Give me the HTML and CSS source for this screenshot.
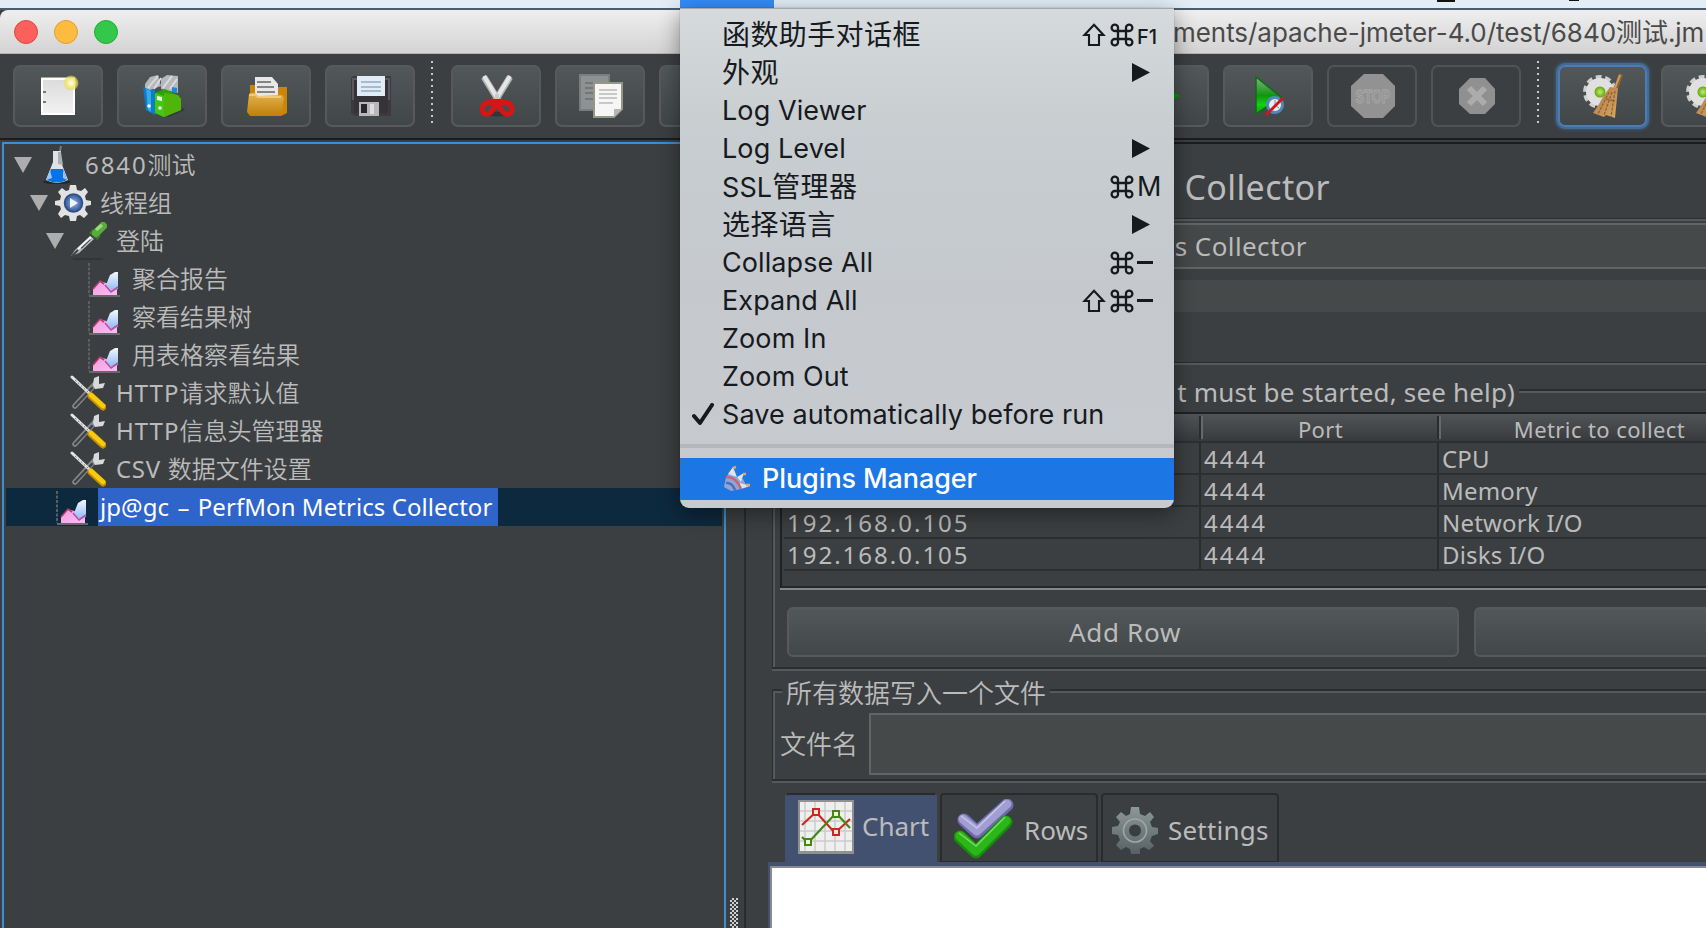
FILE: index.html
```html
<!DOCTYPE html>
<html lang="zh">
<head>
<meta charset="utf-8">
<title>6840测试.jmx - Apache JMeter</title>
<link rel="stylesheet" href="styles.css">
</head>
<body>
<svg class="defs" width="0" height="0" aria-hidden="true">
  <defs>
    <linearGradient id="gBlue" x1="0" y1="0" x2="0" y2="1"><stop offset="0" stop-color="#f2f8ff"/><stop offset="1" stop-color="#8db9f5"/></linearGradient>
    <linearGradient id="gPink" x1="0" y1="0" x2="1" y2="1"><stop offset="0" stop-color="#f59bdd"/><stop offset="1" stop-color="#f9bdf5"/></linearGradient>
    <linearGradient id="gGold" x1="0" y1="0" x2="0" y2="1"><stop offset="0" stop-color="#e3b450"/><stop offset="1" stop-color="#c07f08"/></linearGradient>
    <linearGradient id="gPage" x1="0" y1="0" x2="0" y2="1"><stop offset="0" stop-color="#dcdcdc"/><stop offset="1" stop-color="#f2f2f2"/></linearGradient>
    <linearGradient id="gPlay" x1="0" y1="0" x2="0" y2="1"><stop offset="0" stop-color="#7fb77f"/><stop offset=".5" stop-color="#129512"/><stop offset=".75" stop-color="#12d212"/><stop offset="1" stop-color="#0a9a0a"/></linearGradient>
    <linearGradient id="gGear" x1="0" y1="0" x2="0" y2="1"><stop offset="0" stop-color="#8e9898"/><stop offset="1" stop-color="#566163"/></linearGradient>
    <linearGradient id="gBroom" x1="0" y1="0" x2="1" y2="1"><stop offset="0" stop-color="#a97a45"/><stop offset="1" stop-color="#dca562"/></linearGradient>
    <radialGradient id="gOrb"><stop offset="0" stop-color="#c4ec70"/><stop offset="1" stop-color="#5fa90c"/></radialGradient>
    <radialGradient id="gSpark"><stop offset="0" stop-color="#fffef0"/><stop offset=".5" stop-color="#f7ec8a"/><stop offset="1" stop-color="#e8d84a" stop-opacity=".5"/></radialGradient>
    <radialGradient id="gPlayBall"><stop offset="0" stop-color="#9fb6da"/><stop offset="1" stop-color="#2b5596"/></radialGradient>
  </defs>
  <symbol id="graph" viewBox="0 0 34 34">
    <path d="M2 0V32" stroke="#5c5f61" stroke-width="2" stroke-dasharray="3 1.5"/>
    <path d="M2 33H33" stroke="#66686a" stroke-width="2"/>
    <path d="M6 32V26L13 18L19 20L30 22V32Z" fill="url(#gPink)"/>
    <path d="M6 26L13 18L17 21" fill="none" stroke="#b23a6c" stroke-width="1.6"/>
    <path d="M19 22L23 12L28 9H31V26L25 28Z" fill="url(#gBlue)"/>
    <path d="M18 22L24 29L31 24" fill="none" stroke="#b8509c" stroke-width="1.6"/>
  </symbol>
  <symbol id="tools" viewBox="0 0 36 36">
    <path d="M5 31L25 9" stroke="#85888a" stroke-width="5.500" stroke-linecap="round"/>
    <path d="M5 31L22 13" stroke="#3e4244" stroke-width="2.4" stroke-linecap="round"/>
    <path d="M29 1L24 3L23 10L25 14L33 13L35 8L29 9Z" fill="#d9d9d9"/>
    <path d="M2 2L19 18" stroke="#e6e6e6" stroke-width="3" stroke-linecap="round"/>
    <path d="M5 5L19 18" stroke="#777" stroke-width="1" stroke-dasharray="2 2"/>
    <path d="M21 21L33 32" stroke="#c48f04" stroke-width="7" stroke-linecap="round"/>
    <path d="M21 20L33 31" stroke="#f9cb0c" stroke-width="4.6" stroke-linecap="round"/>
  </symbol>
  <symbol id="sweep" viewBox="0 0 44 46">
    <circle cx="18" cy="19" r="14.500" fill="none" stroke="#cfcfcf" stroke-width="5" stroke-dasharray="5.600 3.510"/>
    <circle cx="18" cy="19" r="9.5" fill="none" stroke="#e0e0e0" stroke-width="9"/>
    <circle cx="18" cy="19" r="5.5" fill="url(#gOrb)"/>
    <path d="M39 1L34 15" stroke="#8b6233" stroke-width="4.5"/><path d="M38 2L33 15" stroke="#d0a066" stroke-width="2"/>
    <path d="M28 14L36 15L33 45L24 42L22 44L11 40L17 31L21 24Z" fill="url(#gBroom)"/>
    <path d="M27 19L16 41M30 19L22 42M33 18L29 44M24 26L33 28" stroke="#8a6233" stroke-width="1.2" fill="none" stroke-dasharray="3 1.2"/>
  </symbol>
  <symbol id="cmd" viewBox="0 0 24 24">
    <path d="M8 8H16V16H8ZM8 8V5.200A3.200 3.200 0 1 0 4.800 8H8M16 8H19.200A3.200 3.200 0 1 0 16 5.200V8M16 16V18.800A3.200 3.200 0 1 0 19.200 16H16M8 16H4.800A3.200 3.200 0 1 0 8 18.800V16" fill="none" stroke="#161a1e" stroke-width="2.3"/>
  </symbol>
  <symbol id="shift" viewBox="0 0 24 24">
    <path d="M12 1.800L21.500 12H17V22H7V12H2.500Z" fill="none" stroke="#161a1e" stroke-width="2.100" stroke-linejoin="miter"/>
  </symbol>
  <symbol id="sub" viewBox="0 0 18 19"><path d="M0 0L18 9.500L0 19Z" fill="#161a1e"/></symbol>
  <symbol id="open" viewBox="0 0 18 16"><path d="M0 0H18L9 16Z" fill="#adadad"/></symbol>
</svg>

<div class="menubar"><div class="menubar-active"></div><i class="bar-mark"></i><i class="bar-tail"></i></div>
<div class="window">
  <header class="titlebar">
    <span class="light red"></span><span class="light yellow"></span><span class="light green"></span>
    <span class="title">ments/apache-jmeter-4.0/test/6840测试.jm</span>
  </header>

  <div class="toolbar">
    <div class="tool"><svg width="40" height="42" viewBox="0 0 40 42"><path d="M2 3H36V40H2Z" fill="#fff"/><path d="M4 5H34V38H4Z" fill="url(#gPage)"/><path d="M2 2.500H36" stroke="#a5a594"/><path d="M4 17h3M4 27h3" stroke="#777" stroke-width="2"/><circle cx="32" cy="8" r="7.500" fill="url(#gSpark)"/></svg></div>
    <div class="tool"><svg width="44" height="44" viewBox="0 0 44 44"><path d="M22 40L42 34L44 36L28 43Z" fill="#353a3b"/><path d="M4 10L9 3L17 1L20 12L4 18ZM20 5L26 1L37 2V19L20 15Z" fill="#b5b9bb"/><path d="M7 14L17 2M13 15L20 4M22 14L31 2M29 15L36 5" stroke="#dcdedf" stroke-width="1.800"/><path d="M2 13L9 16L14 15V41L5 36Z" fill="#087dc8"/><path d="M5 15L10 17V38L7 36Z" fill="#39a8ea"/><path d="M31 13L36 14V19L31 18Z" fill="#1d8bd2"/><path d="M14 19L24 15L36 21L40 25V36L23 43L14 39Z" fill="#2aa40b"/><path d="M23 19L37 21L40 25V36L23 43Z" fill="#4fb50b"/><path d="M14 19L23 22V43L14 39Z" fill="#43c714"/><path d="M16 22L21 23V27L16 26Z" fill="#efffe8"/><circle cx="8" cy="32" r="1.800" fill="#fff"/><circle cx="19" cy="34" r="1.800" fill="#fff"/></svg></div>
    <div class="tool"><svg width="42" height="42" viewBox="0 0 42 42"><path d="M4 10H12V20H4ZM30 12H41V38L35 41Z" fill="#cb8605"/><path d="M9 2H26L32 9V23H9Z" fill="#e8e8e8"/><path d="M11 7H25M11 12H28M11 17H29" stroke="#858585" stroke-width="2"/><path d="M3 19L5 18H9L12 21L36 20L38 23L35 41H4L1 37Z" fill="url(#gGold)"/><path d="M3 20L10 20L12 22H35" stroke="#f0ca76" stroke-width="2" fill="none"/></svg></div>
    <div class="tool"><svg width="40" height="42" viewBox="0 0 40 42"><path d="M0 3L2 1H40V41H4L0 38Z" fill="#3c3a3d"/><path d="M1 3H39V25H1Z" fill="#5a595d"/><path d="M3 5H37V38H3Z" fill="#353338"/><path d="M6 1H34V21H6Z" fill="#e2ecf6"/><path d="M10 7H30M10 12H30M10 16H30" stroke="#91abc2" stroke-width="1.700"/><path d="M8 27H28V41H8Z" fill="#b8b8b8"/><path d="M10 29H16V38H10Z" fill="#29272a"/><path d="M19 29H23V39H19Z" fill="#ddd"/></svg></div>
    <div class="dots"></div>
    <div class="tool"><svg width="36" height="44" viewBox="0 0 36 44"><ellipse cx="18" cy="40" rx="13" ry="2.500" fill="#313637"/><path d="M5 3L21 29M31 3L15 29" stroke="#b2b5b5" stroke-width="6.500"/><path d="M5 2L20 27M31 2L16 27" stroke="#e6e6e6" stroke-width="4"/><path d="M17 27L9 28.500Q3 30 3 36Q4 41 9 40Q14 38 18 28Q22 38 27 40Q32 41 33 36Q33 30 27 28.500L19 27" fill="none" stroke="#d91414" stroke-width="5"/><path d="M16 20H20V25H16Z" fill="#c9c9c9"/></svg></div>
    <div class="tool"><svg width="44" height="46" viewBox="0 0 44 46"><path d="M1 2H30V37H1Z" fill="#8f9293"/><path d="M1 2H30V37H1Z" fill="none" stroke="#7b7e7f" stroke-width="2"/><path d="M6 10H24M6 15H24M6 20H24M6 26H22" stroke="#6c6f70" stroke-width="1.600"/><path d="M15 10H43V36L35 44H15Z" fill="#f6f6f6" stroke="#969686" stroke-width="2"/><path d="M20 17H38M20 21H38M20 25H38M20 30H34" stroke="#b9bab5" stroke-width="1.600"/><path d="M35 44V36H43Z" fill="#b5b7b6"/></svg></div>
    <div class="tool"></div><div class="tool"></div>
    <div class="dots"></div>
    <div class="tool"></div><div class="tool"></div><!-- expand / collapse -->
    <div class="dots"></div>
    <div class="tool run"><svg width="32" height="44" viewBox="0 0 32 44"><path d="M0 2L32 22L0 42Z" fill="#17801a"/><path d="M2 21H29L2 40Z" fill="#0ca10c"/></svg></div>
    <div class="tool"><svg width="30" height="44" viewBox="0 0 30 44"><path d="M2 3L27 23L2 40Z" fill="url(#gPlay)" stroke="#126b16" stroke-width="1.500"/><circle cx="21" cy="31" r="7.500" fill="#e8edf2" stroke="#5189bd" stroke-width="3"/><path d="M21 26V31L25 34" stroke="#889" fill="none"/><path d="M12 41L29 24" stroke="#d01717" stroke-width="3"/></svg></div>
    <div class="tool off"><svg width="44" height="44" viewBox="0 0 44 44"><path d="M13 0H32L44 12V32L32 44H13L0 32V12Z" fill="#929292"/><text class="stop" x="22" y="29" text-anchor="middle" textLength="35" lengthAdjust="spacingAndGlyphs">STOP</text></svg></div>
    <div class="tool off"><svg width="36" height="36" viewBox="0 0 36 36"><path d="M11 0H26L36 11V26L26 36H11L0 26V11Z" fill="#909090"/><path d="M10 10L26 26M26 10L10 26" stroke="#acacac" stroke-width="6"/></svg></div>
    <div class="dots"></div>
    <div class="tool focus"><svg width="44" height="46"><use href="#sweep"/></svg></div>
    <div class="tool"><svg width="44" height="46"><use href="#sweep"/></svg></div>
  </div>

  <main class="split">
    <nav class="tree">
      <div class="node d0"><svg class="tri" width="18" height="16"><use href="#open"/></svg><svg class="ico" width="36" height="38" viewBox="0 0 36 38"><ellipse cx="18" cy="36" rx="14" ry="2" fill="#242728"/><path d="M14 5H22V16L29 34Q18 40 7 34L14 16Z" fill="#dfe3e5"/><path d="M19 6H22L24 19L19 18Z" fill="#a9afb2"/><path d="M21 5L22 0" stroke="#77797b" stroke-width="2"/><path d="M12 23L24 23L28 34Q18 39 8 34Z" fill="#0874e3"/><path d="M11 24L7 34L13 32Z" fill="#9fc4fa"/><path d="M24 24L28 34L24 32Z" fill="#a3c2f2"/></svg><span><b class="num">6840</b>测试</span></div>
      <div class="node d1"><svg class="tri" width="18" height="16"><use href="#open"/></svg><svg class="ico" width="36" height="38" viewBox="0 0 36 38"><path d="M15 1H21L22 6L26 7L30 4L33 8L30 12L31 16L36 17V21L31 22L30 26L33 30L29 34L25 31L22 32L21 37H15L14 32L10 31L6 34L3 30L6 25L5 22L0 21V17L5 16L6 12L3 8L7 4L11 7L14 6Z" fill="#e2e2e2"/><circle cx="18.500" cy="19" r="9" fill="url(#gPlayBall)" stroke="#2c4f8b" stroke-width="1.500"/><path d="M15 14L23 19L15 24Z" fill="#eef3fc"/></svg><span>线程组</span></div>
      <div class="node d2"><svg class="tri" width="18" height="16"><use href="#open"/></svg><svg class="ico" width="36" height="38" viewBox="0 0 36 38"><path d="M2 37H32" stroke="#2f3233" stroke-width="1.500"/><path d="M0 34L4 28L19 14L23 17L8 31Z" fill="#b9bcbc"/><path d="M1 34L7 28M10 26L19 17" stroke="#3f4546" stroke-width="2"/><path d="M7 27L20 15" stroke="#f6f6f6" stroke-width="1.800"/><path d="M20 9L28 16" stroke="#397a29" stroke-width="5"/><path d="M25 11L32 4" stroke="#58ac3c" stroke-width="8" stroke-linecap="round"/><path d="M25 8L31 3" stroke="#9cdb78" stroke-width="3"/></svg><span>登陆</span></div>
      <div class="node d3"><svg class="ico g" width="34" height="34"><use href="#graph"/></svg><span>聚合报告</span></div>
      <div class="node d3"><svg class="ico g" width="34" height="34"><use href="#graph"/></svg><span>察看结果树</span></div>
      <div class="node d3"><svg class="ico g" width="34" height="34"><use href="#graph"/></svg><span>用表格察看结果</span></div>
      <div class="node leaf2"><svg class="ico" width="36" height="36"><use href="#tools"/></svg><span><b class="http">HTTP</b>请求默认值</span></div>
      <div class="node leaf2"><svg class="ico" width="36" height="36"><use href="#tools"/></svg><span><b class="http">HTTP</b>信息头管理器</span></div>
      <div class="node leaf2"><svg class="ico" width="36" height="36"><use href="#tools"/></svg><span><b class="csv">CSV </b>数据文件设置</span></div>
      <div class="node sel"><svg class="ico g" width="34" height="34"><use href="#graph"/></svg><span class="picked">jp@gc <b class="en">–</b> PerfMon Metrics Collector</span></div>
    </nav>
    <div class="divider"><i class="grip"></i></div>
    <section class="pane">
      <h1>Collector</h1>
      <div class="rule"></div>
      <div class="name-field"><span>s Collector</span></div>
      <div class="comment-field"></div>
      <div class="rule low"></div>
      <div class="group servers">
        <div class="legend"><i class="stub"></i><span class="servers-title">t must be started, see help)</span><i class="line"></i></div>
        <div class="group-body">
          <div class="table">
            <div class="tr th"><div></div><div>Port</div><div>Metric to collect</div></div>
            <div class="tr"><div></div><div class="n">4444</div><div>CPU</div></div>
            <div class="tr"><div></div><div class="n">4444</div><div>Memory</div></div>
            <div class="tr"><div class="n">192.168.0.105</div><div class="n">4444</div><div>Network I/O</div></div>
            <div class="tr"><div class="n">192.168.0.105</div><div class="n">4444</div><div>Disks I/O</div></div>
          </div>
          <div class="actions"><div class="btn">Add Row</div><div class="btn"></div></div>
        </div>
      </div>
      <div class="group file">
        <div class="legend"><i class="stub"></i><span>所有数据写入一个文件</span><i class="line"></i></div>
        <div class="group-body file-row"><label>文件名</label><div class="input"></div></div>
      </div>
      <div class="tabs">
        <div class="tab active"><svg width="56" height="54" viewBox="0 0 56 54"><path d="M0 0H56V54H0Z" fill="#8f9090"/><path d="M2 2H54V51H2Z" fill="#efefef"/><path d="M7 2V51M17 2V51M27 2V51M37 2V51M47 2V51M2 11H54M2 21H54M2 31H54M2 41H54" stroke="#cbcbcb" stroke-width="1.500"/><path d="M4 25L18 12L37 33L52 19" fill="none" stroke="#c92920" stroke-width="2.200"/><path d="M4 37L10 43L38 13L52 28" fill="none" stroke="#448711" stroke-width="2.200"/><path d="M15 9H21V15H15ZM35 29H41V35H35Z" fill="#fde1da" stroke="#c92920" stroke-width="2"/><path d="M7 39H13V45H7ZM35 11H41V17H35Z" fill="#f1ffd8" stroke="#448711" stroke-width="2"/></svg><span class="t1">Chart</span></div>
        <div class="tab"><svg width="60" height="60" viewBox="0 0 60 60"><path d="M10 21L23 33L53 6" fill="none" stroke="#6e6bab" stroke-width="13" stroke-linecap="round" stroke-linejoin="round"/><path d="M9 20L23 32L53 5" fill="none" stroke="#a19ed1" stroke-width="9" stroke-linecap="round" stroke-linejoin="round"/><path d="M7 17L23 29L51 2" fill="none" stroke="#c9c7e8" stroke-width="1.500"/><path d="M6 38L22 53L52 23" fill="none" stroke="#168d0b" stroke-width="13" stroke-linecap="round" stroke-linejoin="round"/><path d="M6 37L22 52L52 22" fill="none" stroke="#2db61a" stroke-width="9.500" stroke-linecap="round" stroke-linejoin="round"/><path d="M5 34L22 47L51 18" fill="none" stroke="#79dc65" stroke-width="1.500"/></svg><span class="t2">Rows</span></div>
        <div class="tab"><svg width="46" height="48" viewBox="0 0 46 48"><path d="M19 0H27L28 7L33 9L38 5L42 10L38 15L40 20L46 21V27L40 29L38 34L42 39L37 43L32 40L28 42V47H19L18 42L14 40L9 43L4 38L8 33L6 28L0 27V20L6 19L8 15L4 10L9 5L14 9L18 7Z" fill="url(#gGear)"/><circle cx="23" cy="23.500" r="11.500" fill="none" stroke="#9ca7a7" stroke-width="1.600"/><circle cx="23" cy="23.500" r="6" fill="#393f40"/></svg><span class="t3">Settings</span></div>
      </div>
      <div class="chart-panel"><div class="canvas"></div></div>
    </section>
  </main>
</div>

<div class="menu">
  <div class="item zh"><span>函数助手对话框</span><span class="keys"><svg width="24" height="24"><use href="#shift"/></svg><svg width="24" height="24"><use href="#cmd"/></svg><b class="k f1">F1</b></span></div>
  <div class="item zh"><span>外观</span><svg class="sub" width="18" height="19"><use href="#sub"/></svg></div>
  <div class="item"><span>Log Viewer</span></div>
  <div class="item"><span>Log Level</span><svg class="sub" width="18" height="19"><use href="#sub"/></svg></div>
  <div class="item"><span>SSL<b class="zh">管理器</b></span><span class="keys"><svg width="24" height="24"><use href="#cmd"/></svg><b class="k m">M</b></span></div>
  <div class="item zh"><span>选择语言</span><svg class="sub" width="18" height="19"><use href="#sub"/></svg></div>
  <div class="item"><span>Collapse All</span><span class="keys"><svg width="24" height="24"><use href="#cmd"/></svg><b class="k dash"></b></span></div>
  <div class="item"><span>Expand All</span><span class="keys"><svg width="24" height="24"><use href="#shift"/></svg><svg width="24" height="24"><use href="#cmd"/></svg><b class="k dash"></b></span></div>
  <div class="item"><span>Zoom In</span></div>
  <div class="item"><span>Zoom Out</span></div>
  <div class="item checked"><svg width="22" height="23" viewBox="0 0 22 23"><path d="M2 13L8 20L20 2" fill="none" stroke="#161a1e" stroke-width="4" stroke-linecap="round" stroke-linejoin="round"/></svg><span>Save automatically before run</span></div>
  <div class="sep"></div>
  <div class="item hot"><svg width="28" height="28" viewBox="0 0 28 28"><path d="M3 12L8 6L13 12L20 14L22 18L25 22L18 24L8 26L1 22Z" fill="#8fa5d6"/><path d="M5 9L10 2L14 12ZM14 12L21 8L18 17ZM17 18L27 21L17 24Z" fill="#dfe3ee"/><path d="M3 12Q13 11 18 24" fill="none" stroke="#c9627a" stroke-width="2.500"/><path d="M10 3L13 2M20 9L23 9M23 20L27 20" stroke="#e8a760" stroke-width="2.500"/><path d="M3 18Q9 17 12 25" fill="none" stroke="#4a6fc0" stroke-width="2.500"/></svg><span>Plugins Manager</span></div>
</div>
</body>
</html>
```
FILE: styles.css
```css
* { box-sizing: border-box; }
html, body { margin: 0; width: 1706px; height: 928px; overflow: hidden; }
body {
  position: relative;
  background: #3c3f41;
  color: #bbbbbb;
  font: 24px/1 "Noto Sans", "Noto Sans CJK SC", sans-serif;
  white-space: nowrap;
}
.defs { position: absolute; }
svg { display: block; flex: none; }
b, em { font-weight: inherit; font-style: normal; }

/* system menu bar */
.menubar { position: relative; height: 10px; background: #e2edf6; border-bottom: 2px solid #4a5d70; padding-left: 680px; }
.menubar-active { width: 94px; height: 8px; background: #348cf8; }
.bar-mark, .bar-tail { position: absolute; top: 0; background: #111; }
.bar-mark { left: 1437px; width: 18px; height: 2px; }
.bar-tail { left: 1569px; width: 10px; height: 1px; }

.window { height: 918px; display: flex; flex-direction: column; }
.titlebar {
  height: 44px; flex: none; display: flex; align-items: center; gap: 16px; padding-left: 14px;
  background: linear-gradient(#efefef, #d3d3d3); border-bottom: 1px solid #b4b4b4; border-top-left-radius: 8px;
}
.light { width: 24px; height: 24px; border-radius: 50%; border: 1px solid; flex: none; }
.red { background: #fc605c; border-color: #e0443e; }
.yellow { background: #fdbc40; border-color: #dea034; }
.green { background: #34c84a; border-color: #27aa35; }
.title { margin: 2px 0 0 1039px; color: #4a4a4a; font: 26px/30px Inter, "Noto Sans CJK SC", sans-serif; letter-spacing: -.05px; }

.toolbar {
  height: 86px; flex: none; display: flex; align-items: flex-start; gap: 14px; padding: 11px 0 0 13px;
  border-bottom: 2px solid #1b1c1e; overflow: hidden;
}
.tool {
  width: 90px; height: 62px; flex: none; display: flex; align-items: center; justify-content: center;
  border: 2px solid #58595a; border-radius: 7px; background: linear-gradient(#525759, #414748);
}
.tool svg { margin: 0 0 0 2px; }
.tool.off { background: none; border-color: #505253; }
.tool.focus { margin: 0 0 0 1px; width: 89px; border-color: #4b7db5; box-shadow: 0 0 0 2px #456a94, 0 0 3px 3px #3d5877; }
.tool.run { justify-content: flex-end; padding-right: 26px; }
.dots { width: 2px; height: 64px; margin: -4px 4px 0 2px; flex: none; background: repeating-linear-gradient(#c9c9c9 0 2px, transparent 2px 6px); }
.stop { font: bold 18px "Liberation Sans", sans-serif; fill: #929292; stroke: #aaaaaa; stroke-width: .9px; }

.split { flex: 1; min-height: 0; display: flex; padding-top: 2px; }

/* tree */
.tree { width: 724px; margin-left: 2px; flex: none; border: 2px solid #3d8ed2; border-bottom: 0; padding: 2px 0 0 2px; }
.node { height: 38px; display: flex; align-items: center; line-height: 38px; font-weight: 350; }
.node .tri { margin: -1px 7px 0 0; }
.node .ico { margin-right: 9px; }
.node .ico.g { margin: 1px 11px 0 0; }
.d0 { padding-left: 8px; } .d1 { padding-left: 24px; } .d2 { padding-left: 40px; }
.node.d0 .ico { margin-right: 10px; }
.d3 { padding-left: 81px; }
.leaf2 { padding-left: 64px; }
.node.leaf2 .ico { margin-right: 10px; }
.node b { font-weight: 400; }
.num { letter-spacing: 1.9px; }
.http { letter-spacing: 1px; }
.csv { letter-spacing: .7px; }
.sel { background: #0d293e; padding-left: 49px; margin-right: 2px; }
.node.sel .ico.g { margin-right: 9px; }
.picked { background: #2f65ca; color: #fff; height: 38px; padding: 0 7px 0 2px; font-weight: 400; width: 400px; letter-spacing: .06px; }
.en { margin: 0 2px; }

.divider { width: 20px; flex: none; border-right: 2px solid #2b2b2d; display: flex; align-items: flex-end; }
.grip { width: 8px; height: 30px; margin-left: 4px; background: repeating-conic-gradient(#d0d0d0 0 25%, transparent 0 50%) 0 0 / 4px 4px; }

/* right pane */
.pane { flex: 1; min-width: 0; border-top: 2px solid #1b1c1e; overflow: hidden; display: flex; flex-direction: column; padding-left: 22px; }
.pane > * { flex: none; }
h1 { margin: 0; height: 74px; font-size: 34px; font-weight: 400; line-height: 87px; width: 562px; text-align: right; letter-spacing: .4px; }
.rule { height: 3px; border-top: 1px solid #2b2d2f; border-bottom: 2px solid #55595b; }
.name-field { height: 46px; margin: 2px -10px 0 0; border: 2px solid #646464; background: #454949; font-size: 26px; line-height: 42px; letter-spacing: .4px; display: flex; }
.name-field span { width: 537px; text-align: right; }
.comment-field { height: 32px; margin-top: 11px; background: #454949; }
.rule.low { margin-top: 50px; }
.group { margin-left: 4px; margin-right: -100px; display: flex; flex-direction: column; }
.legend { display: flex; align-items: flex-start; height: 23px; border-left: 1px solid #2b2d2f; box-shadow: inset 2px 0 #55595b; }
.legend i { height: 4px; border-top: 2px solid #2b2d2f; border-bottom: 2px solid #55595b; }
.legend .stub { width: 9px; }
.legend .line { flex: 1; margin-left: 4px; }
.legend span { margin: -14px 0 0 4px; line-height: 36px; font-size: 26px; }
.group-body { border-left: 1px solid #2b2d2f; box-shadow: inset 2px 0 #55595b, 0 2px #55595b; border-bottom: 2px solid #2b2d2f; }
.servers { margin-top: 24px; }
.servers-title { width: 733px; text-align: right; letter-spacing: .16px; }
.servers .servers-title { margin: -15px 0 0; }
.servers .group-body { height: 257px; padding-left: 7px; }
.table { height: 176px; border: 2px solid #1f2123; border-bottom-color: #252729; box-shadow: 0 2px #85888a; padding-left: 2px; }
.tr { display: flex; height: 32px; border-bottom: 2px solid #2d2e30; line-height: 32px; }
.tr > div { padding-left: 3px; width: 415px; letter-spacing: .2px; }
.tr > div + div { width: 238px; border-left: 2px solid #2a2b2d; }
.tr > div + div + div { width: 324px; }
.tr .n, .tr > div.n { letter-spacing: 2px; }
.th { height: 29px; padding-top: 2px; line-height: 27px; font-size: 22px; text-align: center; background: linear-gradient(#515558, #38393c); }
.th > div { height: 23px; }
.th > div + div { box-shadow: inset 2px 0 #66696a; letter-spacing: .4px; }
.th > div + div + div { padding-right: 4px; }
.actions { display: flex; gap: 15px; padding: 19px 0 0 7px; }
.btn { width: 672px; height: 50px; flex: none; border: 2px solid #58595a; border-radius: 6px; background: linear-gradient(#525759, #424849); text-align: center; line-height: 46px; font-size: 26px; letter-spacing: .7px; padding-left: 4px; }
.file { margin-top: 20px; font-weight: 350; }
.file .legend { height: 20px; }
.file-row { height: 72px; display: flex; padding: 4px 0 0 8px; }
.file-row label { width: 88px; font-size: 26px; line-height: 63px; margin-left: -1px; margin-right: 1px; }
.input { flex: 1; height: 62px; border: 2px solid #646464; background: #454949; }

.tabs { display: flex; gap: 3px; margin-top: 12px; padding-left: 17px; height: 69px; align-items: flex-start; }
.tab { width: 158px; height: 69px; border: 2px solid #2a2b2d; border-bottom-width: 1px; border-radius: 4px 4px 0 0; display: flex; align-items: center; padding-left: 12px; font-size: 26px; }
.tab:last-child { width: 178px; padding-left: 9px; }
.tab.active { width: 152px; background: #435170; border-color: #2a2b2d #435170 #435170; padding-left: 11px; }
.tab.active svg { margin-top: -2px; }
.tab svg { margin-top: 2px; }
.tab:last-child svg { margin-top: 5px; }
.t1 { margin: -5px 0 0 8px; } .t2 { margin: 3px 0 0 10px; } .t3 { margin: 3px 0 0 10px; letter-spacing: .2px; }
.chart-panel { flex: 1 !important; background: #435170; padding: 4px 0 0 2px; }
.canvas { height: 100%; background: #fff; border: 2px solid #8a8a8a; border-bottom: 0; border-right: 0; }

/* options menu */
.menu {
  position: absolute; left: 680px; top: 8px; width: 494px; height: 500px; padding-top: 7px;
  border-radius: 0 0 9px 9px; border-top: 1px solid #a3a8ab; color: #161a1e;
  background: linear-gradient(#d6dadd 0, #c9ced1 22%, #c5c9ce 55%, #c7cbcf 100%);
  box-shadow: 0 6px 22px rgba(0, 0, 0, .42), 0 0 1px rgba(0, 0, 0, .6);
  font: 27px/38px Inter, "Noto Sans CJK SC", sans-serif;
}
.item { height: 38px; display: flex; align-items: center; padding-left: 42px; letter-spacing: .09px; }
.zh { font-size: 28px; letter-spacing: .4px; }
.keys { margin-left: auto; display: flex; align-items: center; gap: 4px; width: 81px; justify-content: flex-end; margin-right: 13px; font-size: 27px; letter-spacing: 0; }
.keys svg { margin-left: -1px; margin-right: 1px; margin-top: -1px; }
.k { width: 24px; margin-left: -2px; }
.f1 { font-size: 20px; margin-top: 4px; font-weight: 500; }
.dash { height: 3px; width: 24px; margin-top: -2px; border-right: 8px solid transparent; background: #161a1e; background-clip: padding-box; }
.sub { margin: -1px 24px 0 auto; }
.checked { padding-left: 12px; }
.checked svg { margin-top: -2px; }
.checked span { margin-left: 8px; }
.sep { height: 4px; margin: 10px 0; background: #b4b8bb; }
.hot { height: 42px; background: #1c76e4; color: #fff; padding-left: 43px; font-weight: 500; letter-spacing: -.1px; }
.hot span { margin-left: 11px; }
```
